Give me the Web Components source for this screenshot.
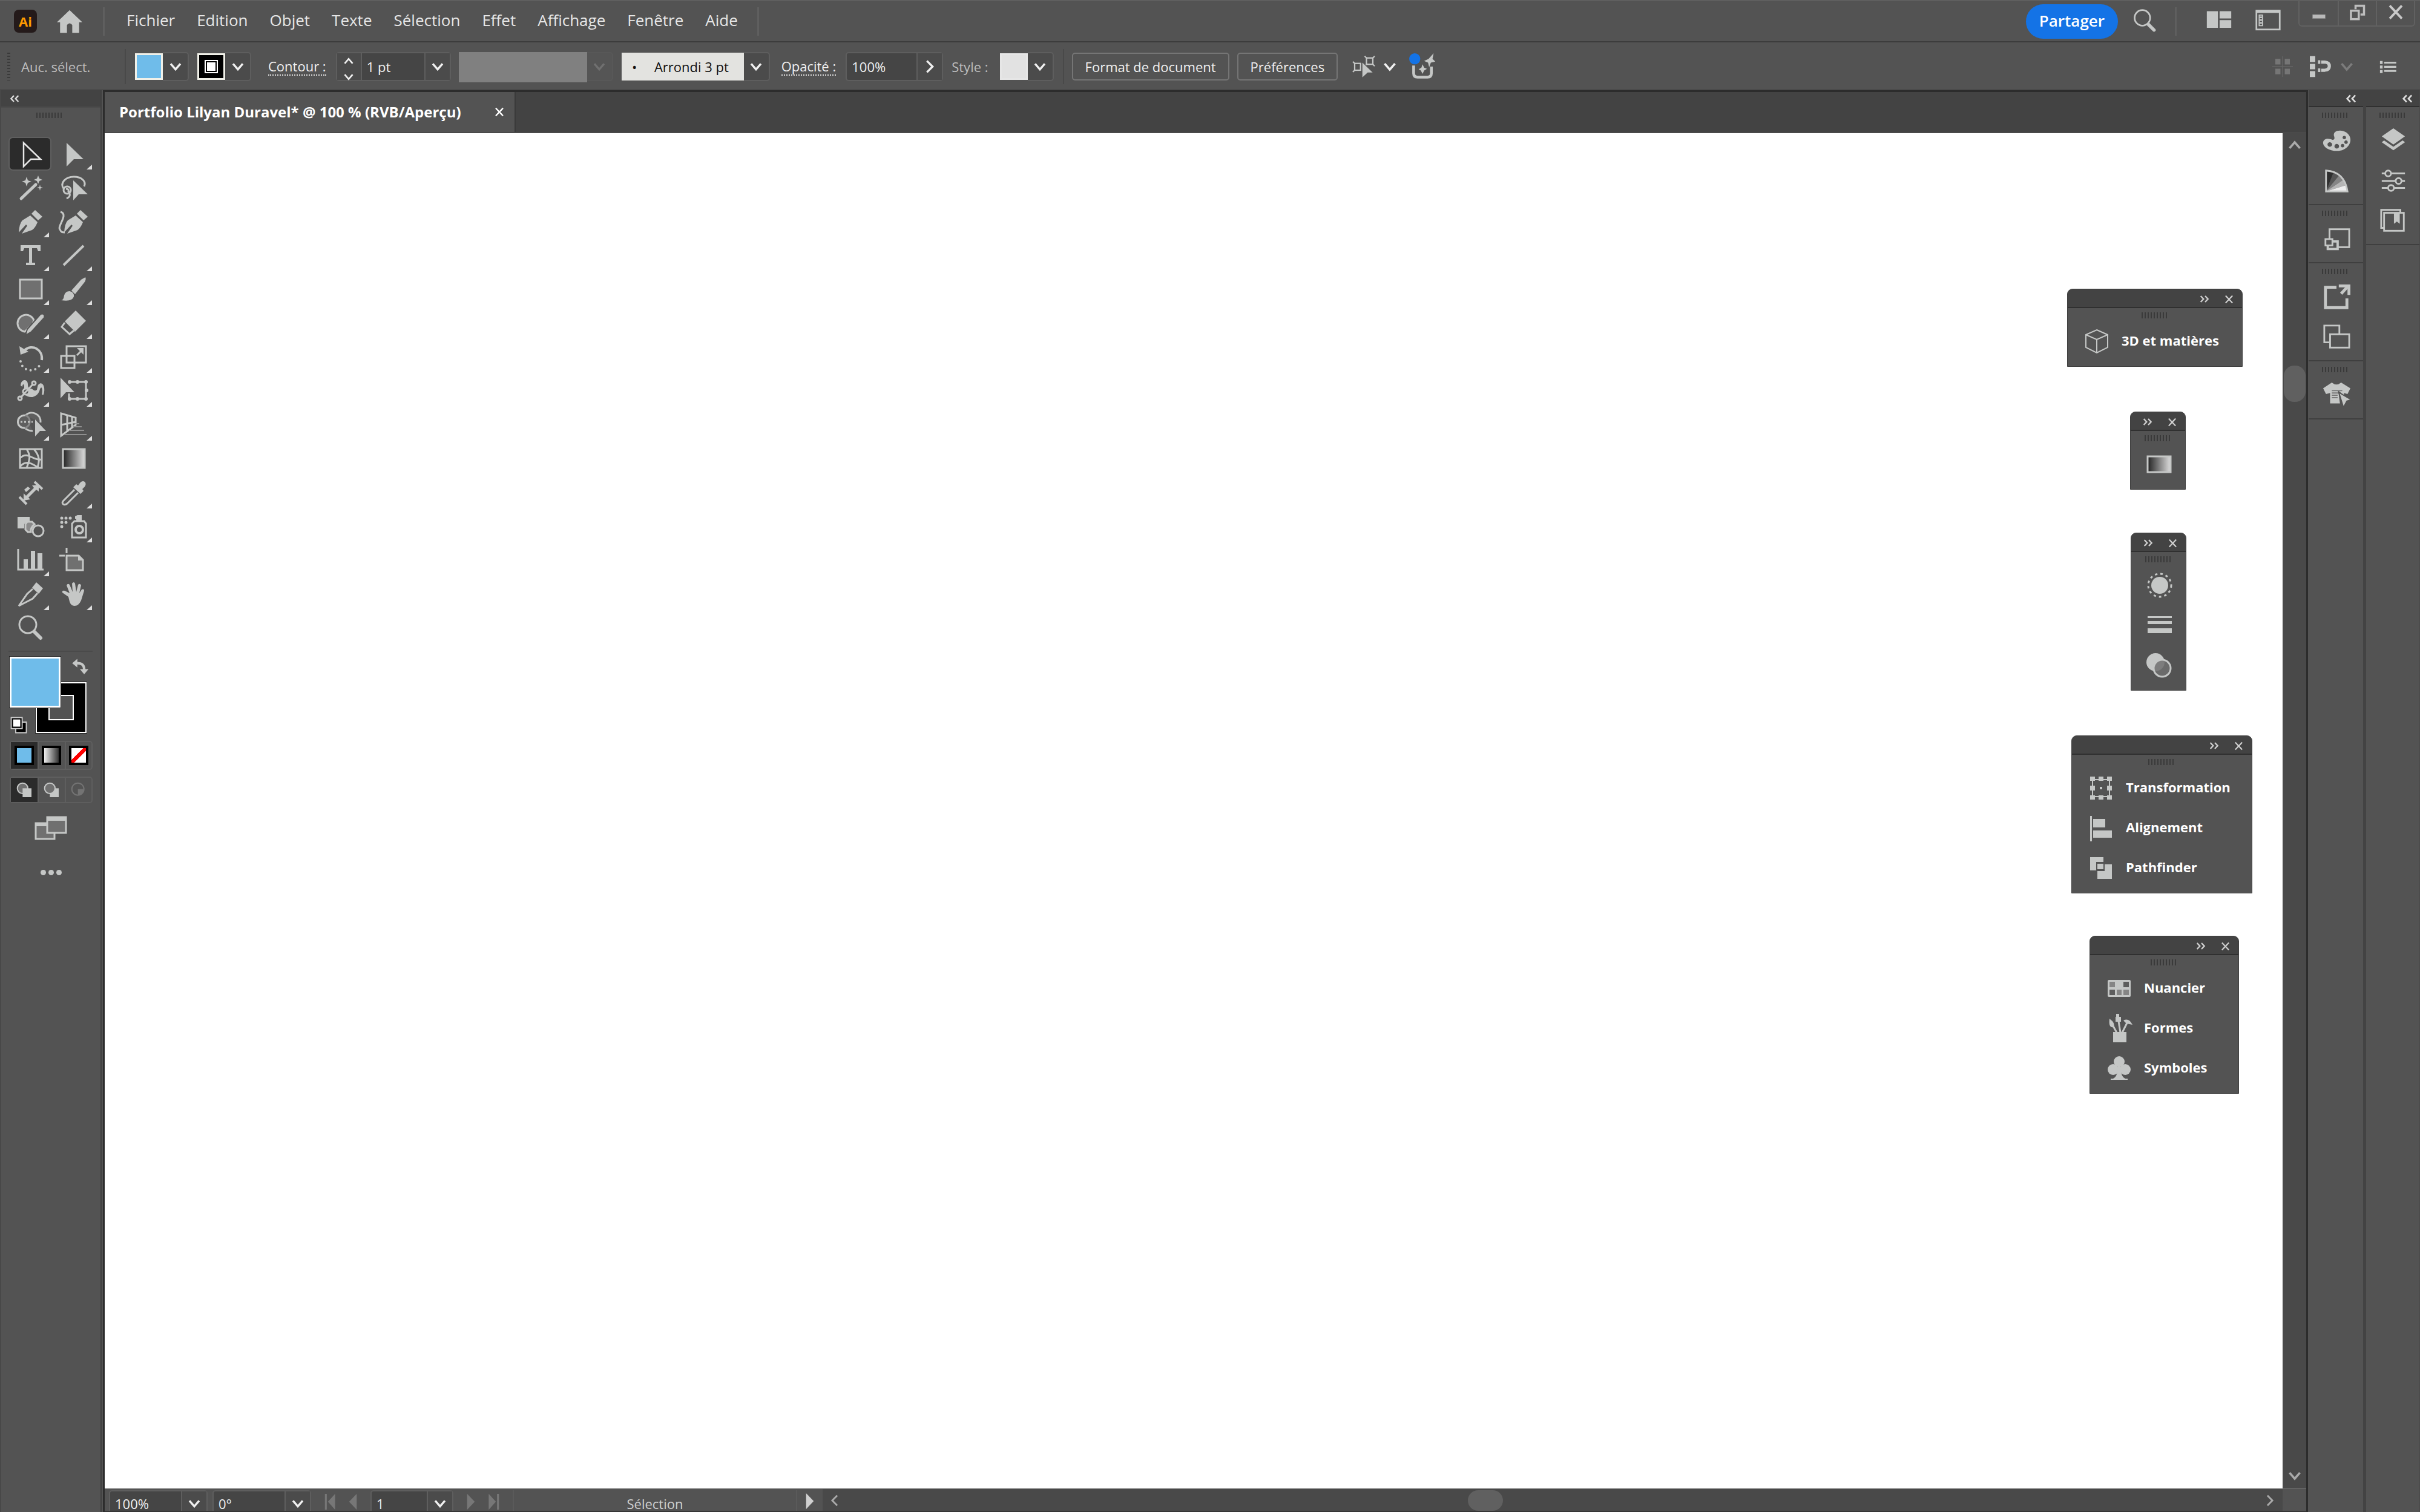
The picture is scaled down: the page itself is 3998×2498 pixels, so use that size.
<!DOCTYPE html>
<html lang="fr">
<head>
<meta charset="utf-8">
<title>Portfolio Lilyan Duravel</title>
<style>
    html, body { margin: 0; height: 100%; }
    body { background: #535353; color: #f0f0f0; font: 22px/30px "Open Sans", "Noto Sans", sans-serif; overflow: hidden; }
</style>
</head>
<body>
<ai-app></ai-app>

<script>
/** Icon drawings on a 48x48 grid. G is the light icon grey, H the half-tone fill. */
const G = '#c5c7c6';
const H = '#707070';
const ARROW = 'M13 6 L41 33 H25 L13 45Z';
const PEN = '<path d="M5 42 Q6 27 11 22 L24 14 L36 25 Q32 35 27 38 L10 44 L19 31 L17 29Z"/><path d="M32 5 L44 16 L37 22 L26 11Z"/>';

const ICONS = {
    select: `<path d="${ARROW}" fill="none" stroke="#e8e8e8" stroke-width="2.5"/>`,
    direct: `<path d="${ARROW}"/>`,
    wand: '<path d="M9 42 L33 19" stroke-width="5" stroke="currentColor" stroke-linecap="round"/><path d="M18 6 L20 12 L26 14 L20 16 L18 22 L16 16 L10 14 L16 12Z M37 4 L39 9 L44 11 L39 13 L37 18 L35 13 L30 11 L35 9Z M40 19 L41 23 L45 24 L41 25 L40 29 L39 25 L35 24 L39 23Z"/>',
    lasso: '<g class="l"><path d="M9 27 C0 16 12 6 25 6 C38 6 46 14 42 22"/><circle cx="14" cy="28" r="6"/><path d="M12 26 Q17 26 16 30 Q22 38 13 42"/></g><path d="M24 12 L48 35 H33 L24 45Z"/>',
    pen: PEN,
    curvature: `<g transform="translate(4 0)">${PEN}</g><path class="l" d="M3 8 C17 12 -3 32 2 37 C4 42 6 42 10 42"/>`,
    type: '<path d="M8 7 H41 V17 H37 L35 12 H27 V36 H32 V40 H17 V36 H22 V12 H14 L12 17 H8Z"/>',
    line: '<path class="l" style="stroke-width:4" d="M8 40 L41 8"/>',
    rect: `<rect class="l" x="7" y="8" width="36" height="31" style="fill:${H}"/>`,
    brush: '<path d="M44 4 Q46 8 42 13 L27 32 L21 26 L37 8Z"/><path d="M4 42 Q8 42 9 34 Q11 27 18 27 Q26 29 25 36 Q22 45 4 42Z"/>',
    shaper: `<path class="l" style="fill:${H}" d="M30 19 A14 14 0 1 0 15 38 L28 25Z"/><path stroke="#535353" stroke-width="2" d="M41 9 Q49 7 47 15 L26 38 L16 44 L19 34Z"/>`,
    eraser: '<path d="M28 3 L45 20 L27 38 L10 21Z"/><path class="l" d="M10 23 L5 30 L18 42 L25 36"/>',
    rotate: '<path class="l" style="stroke-width:4" d="M14 13 C28 1 45 12 43 29"/><path d="M6 6 L8 20 L21 15Z"/><path class="l" style="stroke-width:4" stroke-linecap="round" stroke-dasharray="0 8" d="M8 31 A17 17 0 0 0 41 34"/>',
    scale: '<g class="l"><rect x="13" y="6" width="32" height="27"/><rect x="4" y="22" width="22" height="20"/><path d="M30 21 L39 12"/></g><path d="M41 9 V20 L30 9Z"/>',
    width: '<path d="M8 15 C9 3 20 4 20 13 C20 18 22 20 24 20 C28 19 30 26 35 22 C36 18 36 14 38 13 C44 7 50 18 46 30 H43 C45 22 43 14 40 21 C37 33 27 36 20 33 C14 31 14 24 14 18 C14 11 11 12 11 17Z"/><g class="l"><path d="M8 35 L29 12"/><circle cx="30" cy="11" r="3"/><circle cx="17" cy="25" r="5" style="fill:#535353"/><path d="M14 28 L20 22"/><circle cx="7" cy="36" r="3"/></g>',
    free: '<g class="l"><path d="M17 9 H45 V37 H17 V28"/></g><path d="M3 2 L26 26 H12 L3 36Z"/><g><circle cx="18" cy="9" r="3"/><circle cx="45" cy="9" r="3"/><circle cx="45" cy="37" r="3"/><circle cx="18" cy="37" r="3"/><circle cx="31" cy="9" r="3"/><circle cx="46" cy="23" r="3"/><circle cx="31" cy="37" r="3"/></g>',
    shapebuilder: '<g class="l" style="fill:#5f5f5f"><path d="M16 8 C26 -1 42 6 41 20 M28 34 C22 34 18 32 15 29 C0 30 -1 8 16 8"/><path d="M16 8 A11 11 0 0 1 15 29" style="stroke:#888"/></g><path d="M8 19 H28" stroke="currentColor" stroke-width="3" stroke-dasharray="3 3"/><path d="M32 15 L50 34 H40 L32 43Z"/>',
    perspective: '<g class="l"><path d="M4 5 L28 12 V24 L4 42Z M4 24 L28 19 M14 8 V34 M22 10 V28"/></g><g stroke="#909090" stroke-width="2"><path d="M27 22 H34 M24 27 H38 M17 33 H42 M9 40 H46"/></g>',
    mesh: '<g class="l"><rect x="7" y="8" width="36" height="31"/><path d="M7 23 C20 10 28 28 43 25 M7 37 C18 24 30 34 38 39 M18 8 C26 20 22 28 18 39 M30 8 C42 22 38 30 36 39"/></g>',
    gradient: '<rect class="l" x="7" y="8" width="36" height="31" style="fill:url(#g)"/>',
    measure: '<path class="l" style="stroke-width:4" d="M31 6 L44 18 M6 31 L18 43"/><path d="M38 11 V22 L34 19 L21 32 L24 35 L13 37 V25 L17 29 L30 16 L27 12Z"/><path d="M14 19 L20 14 L24 17 L17 23Z"/>',
    dropper: '<path d="M35 8 C40 1 48 7 43 14 L39 18 L41 21 L36 26 L24 15 L29 10 L32 12Z"/><path class="l" d="M26 19 L8 37 C3 42 9 46 14 42 L32 24"/>',
    blend: '<path d="M3 8 H23 V16 H18 L14 20 V27 H3Z"/><path class="l" style="fill:#8a8a8a" d="M19 16 H27 L31 20 Q24 26 25 33 H20 L16 29 V20Z"/><circle class="l" cx="37" cy="31" r="9"/>',
    spray: '<g><circle cx="5" cy="10" r="2.5"/><circle cx="12" cy="10" r="2.5"/><circle cx="19" cy="10" r="2.5"/><circle cx="5" cy="17" r="2.5"/><circle cx="12" cy="17" r="2.5"/><circle cx="5" cy="24" r="2.5"/></g><path d="M27 7 L31 5 H38 V14 H29 V11 H27Z"/><path class="l" d="M26 15 H42 L45 19 V42 H22 V19Z"/><circle class="l" style="stroke-width:4" cx="34" cy="29" r="6"/>',
    graph: '<path class="l" d="M4 5 V39 H46"/><path d="M13 22 H20 V38 H13Z M25 8 H32 V38 H25Z M36 12 H44 V38 H36Z"/>',
    artboard: `<path class="l" d="M13 3 V12 M1 16 H10"/><path class="l" style="fill:${H}" d="M13 16 H33 L40 23 V40 H13Z"/><path d="M32 15 V24 H41Z"/>`,
    knife: '<path d="M34 4 L45 14 L38 23 L27 13Z"/><path class="l" d="M28 15 L19 23 L5 43 L28 31 L36 22"/>',
    hand: '<path d="M16 28 L6 21 Q5 17 10 18 L18 22 L13 9 Q15 5 18 8 L23 20 L22 6 Q25 2 27 6 L29 20 L32 8 Q35 5 37 9 L34 22 L38 16 Q42 14 42 18 L37 34 Q33 43 26 43 Q20 43 18 36Z"/>',
    zoom: '<circle class="l" cx="20" cy="18" r="14"/><path stroke="currentColor" stroke-width="6" stroke-linecap="round" d="M31 30 L41 40"/>',
    screen: `<g class="l" style="fill:${H}"><rect x="-1" y="16" width="31" height="26"/><rect x="18" y="6" width="31" height="26"/></g><path d="M-2 15 H17 V21 H-2Z M17 5 H50 V12 H17Z"/>`,
    swap: '<path class="l" style="stroke-width:6" d="M16 15 Q34 14 34 30"/><path d="M6 15 L18 5 V25Z M34 41 L24 29 H44Z"/>',
    defaults: '<path fill="#000" stroke="#ccc" stroke-width="3" d="M16 16 H44 V44 H16Z"/><path fill="#000" stroke="#ccc" stroke-width="3" d="M4 4 H33 V33 H4Z"/><rect x="9" y="9" width="19" height="19" fill="#fff"/>',
    drawnormal: `<circle class="l" cx="20" cy="20" r="13" style="fill:${H}"/><rect x="20" y="20" width="22" height="22"/>`,
    drawbehind: `<rect x="20" y="20" width="22" height="22"/><circle class="l" cx="20" cy="20" r="13" style="fill:${H}"/>`,
    drawinside: '<circle cx="22" cy="22" r="15" fill="none" stroke="#737373" stroke-width="3"/><path fill="#737373" d="M22 22 H37 Q35 35 22 37Z"/>',
    home: '<path d="M24 3 L48 26 H42 V46 H29 V31 Q24 25 19 31 V46 H6 V26 H0Z"/>',
    workspace: '<path d="M2 6 H22 V36 H2Z M25 6 H46 V19 H25Z M25 22 H46 V36 H25Z"/>',
    panelmode: '<rect class="l" x="3" y="5" width="42" height="34"/><path d="M3 4 H45 V9 H3Z"/><rect class="l" x="8" y="13" width="6" height="19" style="stroke-width:2"/><path d="M9 17 H13 M9 22 H13 M9 27 H13" stroke="currentColor" stroke-width="3"/>',
    min: '<path fill="#b9b9b9" stroke="#888" d="M6 31 H42 V42 H6Z"/>',
    restore: '<g fill="none" stroke="#bdbdbd" stroke-width="6"><path d="M18 16 V6 H42 V31 H32"/><rect x="5" y="20" width="22" height="24"/></g>',
    close: '<path d="M8 7 L40 41 M40 7 L8 41" stroke="currentColor" stroke-width="6"/>',
    down: '<path d="M12 17 L24 31 L36 17" fill="none" stroke="currentColor" stroke-width="5"/>',
    up: '<path d="M12 31 L24 17 L36 31" fill="none" stroke="currentColor" stroke-width="5"/>',
    right: '<path d="M17 10 L31 24 L17 38" fill="none" stroke="currentColor" stroke-width="5"/>',
    left: '<path d="M31 10 L17 24 L31 38" fill="none" stroke="currentColor" stroke-width="5"/>',
    collapse: '<path d="M21 9 L7 24 L21 39 M43 9 L29 24 L43 39" fill="none" stroke="currentColor" stroke-width="7"/>',
    expand: '<path d="M5 9 L19 24 L5 39 M27 9 L41 24 L27 39" fill="none" stroke="currentColor" stroke-width="7"/>',
    first: '<path d="M14 3 H19 V45 H14Z M41 3 V45 L22 24Z"/>',
    prev: '<path d="M34 3 V45 L14 24Z"/>',
    next: '<path d="M14 3 V45 L34 24Z"/>',
    last: '<path d="M29 3 H34 V45 H29Z M7 3 V45 L26 24Z"/>',
    similar: '<g class="l"><rect x="4" y="17" width="13" height="15"/><path d="M0 13 L5 18 M0 36 L5 31"/><rect x="30" y="5" width="14" height="14"/><path d="M26 1 L31 6 M48 1 L43 6 M48 23 L43 18 M26 23 L31 18"/></g><path stroke="#535353" stroke-width="2" d="M20 13 L46 38 H33 L20 50Z"/>',
    recolor: '<path class="l" style="stroke-width:5" d="M7 22 V36 Q7 43 14 43 H32 Q39 43 39 36 V24"/><circle cx="9" cy="10" r="10" fill="#1473e6"/><path d="M43 0 L41 10 L46 15 L38 17 L35 25 L33 17 L26 14 L34 10Z M23 20 L26 26 L31 28 L26 31 L23 37 L20 31 L16 29 L21 26Z"/>',
    grid: '<g fill="#767676"><path d="M7 6 H19 V19 H7Z M29 6 H41 V19 H29Z M7 29 H19 V42 H7Z M29 29 H41 V42 H29Z"/><path d="M23 0 H25 V48 H23Z M0 23 H48 V25 H0Z" fill="#666"/></g>',
    magnet: '<path d="M0 1 H12 V14 H0Z M0 18 H12 V30 H0Z M0 34 H12 V47 H0Z"/><path d="M25 14 H33 Q43 15 43 23 Q43 31 33 32 H25" fill="none" stroke="currentColor" stroke-width="7"/><path d="M18 10 H23 V18 H18Z M18 28 H23 V36 H18Z"/>',
    list: '<path d="M3 9 H10 V17 H3Z M3 21 H10 V29 H3Z M3 33 H10 V41 H3Z M14 11 H46 V16 H14Z M14 22 H46 V27 H14Z M14 33 H46 V38 H14Z"/>',
    palette: '<path fill-rule="evenodd" d="M20 16 C16 5 34 3 42 10 C56 22 44 40 28 41 C12 42 0 34 1 26 C3 18 12 20 17 22 Q22 22 20 16Z M37 15 a3 3 0 1 0 1 0Z M40 23 a3 3 0 1 0 1 0Z M34 29 a3 3 0 1 0 1 0Z M24 29 a4 4 0 1 0 1 0Z M12 26 a4 4 0 1 0 1 0Z"/>',
    guide: '<path d="M6 42 V6 L19 9Z" fill="#2e2e2e"/><path d="M6 42 L19 9 L28 15Z" fill="#555"/><path d="M6 42 L28 15 L36 22Z" fill="#858585"/><path d="M6 42 L36 22 L41 31Z" fill="#b5b5b5"/><path d="M6 42 L41 31 L43 42Z" fill="#eee"/><path class="l" d="M6 42 V6 Q38 8 43 42Z"/>',
    transformdoc: '<g class="l"><rect x="12" y="7" width="34" height="31"/><path d="M10 28 H26 V41 H9 V34" style="stroke-width:4;fill:#535353"/><rect x="5" y="24" width="12" height="11" style="fill:#535353"/></g>',
    exporticon: '<path d="M24 7 H5 V42 H42 V26" fill="none" stroke="currentColor" stroke-width="5"/><path d="M32 18 L44 5" stroke="currentColor" stroke-width="5"/><path d="M28 2 H48 V20 H43 V7 H28Z"/>',
    artboards: '<g class="l"><path d="M12 33 H3 V4 H29 V18"/><rect x="13" y="19" width="33" height="23"/></g>',
    mockup: '<path d="M16 2 Q24 9 32 2 L48 12 L43 22 L37 20 V24 L27 16 L30 38 H13 V20 L6 22 L1 12Z"/><path d="M16 16 H34 M16 20 H30 M16 24 H26 M16 28 H26" stroke="#777" stroke-width="2"/><path stroke="#535353" stroke-width="2" d="M28 19 L50 32 L42 34 L36 45Z"/>',
    layers: '<path d="M24 2 L44 16 L24 30 L4 16Z M4 26 L8 23 L24 34 L40 23 L44 26 L24 40Z"/>',
    sliders: '<g class="l"><path d="M4 11 H44 M4 24 H44 M4 36 H44"/><circle cx="15" cy="11" r="5" style="fill:#535353"/><circle cx="33" cy="24" r="5" style="fill:#535353"/><circle cx="20" cy="36" r="5" style="fill:#535353"/></g>',
    library: '<g class="l"><path d="M9 36 H3 V5 H36 V9"/><rect x="8" y="10" width="34" height="31"/></g><path d="M25 10 H35 V29 L30 25 L25 29Z"/>',
    cube: '<path class="l" style="stroke-width:2" d="M24 5 L42 13 V34 L24 43 L6 34 V13Z M6 13 L24 21 L42 13 M24 21 V43"/>',
    gradpanel: '<rect class="l" x="5" y="11" width="38" height="26" style="fill:url(#g)"/>',
    appearance: '<circle cx="24" cy="24" r="14"/><circle class="l" cx="24" cy="24" r="19" stroke-dasharray="4 5"/>',
    stroke: '<path d="M4 9 H44 V12 H4Z M4 17 H44 V22 H4Z M4 29 H44 V37 H4Z"/>',
    transparency: '<circle cx="17" cy="19" r="15"/><circle class="l" cx="28" cy="29" r="14" style="fill:#707070;fill-opacity:.85"/>',
    transform: '<rect class="l" x="10" y="10" width="28" height="28" style="stroke-width:2"/><path d="M6 5 H14 V12 H6Z M20 5 H28 V12 H20Z M34 5 H42 V12 H34Z M6 20 H14 V28 H6Z M34 20 H42 V28 H34Z M6 36 H14 V43 H6Z M20 36 H28 V43 H20Z M34 36 H42 V43 H34Z M22 22 H26 V26 H22Z"/>',
    align: '<path d="M6 4 H9 V46 H6Z M11 9 H31 V23 H11Z M11 28 H42 V40 H11Z"/>',
    pathfinder: '<path fill-rule="evenodd" d="M6 6 H28 V14 H16 V28 H6Z M18 17 H28 V26 H18Z M30 18 H42 V42 H18 V29 H30Z"/>',
    swatches: '<rect x="5" y="10" width="38" height="28" rx="2"/><path fill="#858585" d="M8 13 H17 V22 H8Z M20 26 H28 V35 H20Z M31 26 H40 V35 H31Z"/><path fill="#5d5d5d" d="M31 13 H40 V22 H31Z M8 26 H17 V35 H8Z"/>',
    brushes: '<path d="M14 30 H36 V47 H14Z"/><path d="M8 8 Q18 15 15 22 Q6 24 8 8Z M19 0 H24 V5 H27 V13 H18 V5 H19Z M31 11 Q40 6 46 18 L36 16Z"/><path class="l" d="M14 20 L20 31 M23 12 L26 31 M37 15 L29 31"/>',
    symbols: '<circle cx="24" cy="13" r="9"/><circle cx="14" cy="26" r="9"/><circle cx="34" cy="26" r="9"/><path d="M22 18 H26 Q26 38 34 41 H38 V43 H10 V41 H14 Q22 38 22 18Z"/>'
};

/** Base class: attaches an open shadow root and fills it with styles and markup. */
class AiElement extends HTMLElement {
    constructor() {
        super();
        this.attachShadow({ mode: 'open' });
    }

    connectedCallback() {
        this.shadowRoot.innerHTML = `<style>
            * { box-sizing: border-box; }
            button, input, select { font: inherit; color: inherit; margin: 0; padding: 0; border: 0; background: none; border-radius: 0; }
            button { display: flex; align-items: center; justify-content: center; }
            ${this.styles()}
        </style>${this.render()}`;
    }

    styles() { return ':host { display: block; }'; }
    render() { return '<slot></slot>'; }
    attr(name, fallback = '') { return this.getAttribute(name) ?? fallback; }
}

/** Single icon, drawn from ICONS. */
class AiIcon extends AiElement {
    styles() {
        const size = this.attr('size', '48');
        return `
            :host { display: block; flex: none; width: ${size}px; height: ${size}px; }
            svg { display: block; width: 100%; height: 100%; overflow: visible; fill: currentColor; }
            .l { fill: none; stroke: currentColor; stroke-width: 3; }`;
    }
    render() {
        return `<svg viewBox="0 0 48 48" aria-hidden="true">
            <defs><linearGradient id="g"><stop offset="0" stop-color="#222"/><stop offset="1" stop-color="#ddd"/></linearGradient></defs>
            ${ICONS[this.attr('name')]}</svg>`;
    }
}

/** Row of dark ticks used as a drag handle. */
class AiGrip extends AiElement {
    styles() {
        return `:host { display: block; flex: none; width: 45px; height: 9px;
            background: repeating-linear-gradient(90deg, #3a3a3a 0 2px, #535353 2px 5px); }`;
    }
    render() { return ''; }
}

/** Editable value with optional stepper and drop-down button. */
class AiField extends AiElement {
    styles() {
        return `
            :host { display: flex; flex: none; align-items: center; }
            label { white-space: nowrap; border-bottom: 2px dotted #e0e0e0; line-height: 28px; margin-right: 16px; }
            .box { display: flex; height: ${this.attr('height', '48')}px; border: 2px solid #5e5e5e; border-radius: 5px; background: #454545; }
            input { width: ${this.attr('width')}px; padding: 0 8px; }
            .arrow { width: 42px; border-left: 2px solid #5e5e5e; background: #4b4b4b; }
            .step { display: flex; flex-direction: column; width: 41px; border-right: 2px solid #5e5e5e; background: #4b4b4b; }
            .step button { flex: 1; }`;
    }
    render() {
        const label = this.attr('label');
        return `
            ${label ? `<label for="value">${label}</label>` : ''}
            <div class="box">
                ${this.hasAttribute('stepper') ? `<div class="step">
                    <button aria-label="Augmenter"><ai-icon name="up" size="26"></ai-icon></button>
                    <button aria-label="Diminuer"><ai-icon name="down" size="26"></ai-icon></button>
                </div>` : ''}
                <input id="value" type="text" value="${this.attr('value')}" ${label ? '' : `aria-label="${this.attr('name')}"`}>
                <button class="arrow" aria-label="Ouvrir"><ai-icon name="${this.attr('arrow', 'down')}" size="32"></ai-icon></button>
            </div>`;
    }
}

/** Preview (colour, brush, profile) followed by a drop-down arrow. */
class AiPicker extends AiElement {
    styles() {
        return `
            :host { display: flex; flex: none; height: 48px; }
            ::slotted(*) { flex: none; }
            button { width: 43px; border: 2px solid #5e5e5e; border-left: 0; border-radius: 0 5px 5px 0; background: #4b4b4b; }
            button:disabled { color: #707070; border-color: #585858; background: #555; }`;
    }
    render() {
        return `<slot></slot><button aria-label="${this.attr('name')}" ${this.hasAttribute('disabled') ? 'disabled' : ''}>
            <ai-icon name="down" size="32"></ai-icon></button>`;
    }
}

/** Application bar: logo, menus, sharing and window buttons. */
class AiMenuBar extends AiElement {
    styles() {
        return `
            :host { display: flex; flex: none; align-items: center; height: 70px; padding: 0 8px 0 23px;
                border-top: 2px solid #5f5f5f; border-bottom: 2px solid #3c3c3c; font-size: 26px; color: #e6e6e6; }
            .logo { display: flex; align-items: center; justify-content: center; width: 38px; height: 38px;
                border-radius: 8px; background: #241a1a; color: #ff9a00; font-size: 22px; font-weight: 700; }
            .home { margin: 0 34px 0 33px; color: ${G}; }
            .sep { flex: none; width: 3px; height: 47px; background: #5f5f5f; }
            nav { display: flex; gap: 36px; margin: 0 32px 0 36px; padding-bottom: 4px; }
            .space { flex: 1; }
            .share { height: 57px; padding: 0 22px 2px; border-radius: 29px; background: #1473e6; color: #fff; font-weight: 600; }
            .tool { color: ${G}; }
            .window { display: flex; align-self: flex-start; margin-left: 28px; border: 2px solid #616161; border-top: 0; border-radius: 0 0 6px 6px; }
            .window button { width: 63px; height: 40px; padding-bottom: 4px; color: #c9c9c9; }
            .window button + button { border-left: 2px solid #616161; }`;
    }
    render() {
        const menus = ['Fichier', 'Edition', 'Objet', 'Texte', 'Sélection', 'Effet', 'Affichage', 'Fenêtre', 'Aide'];
        return `
            <span class="logo">Ai</span>
            <button class="home" aria-label="Accueil"><ai-icon name="home" size="42"></ai-icon></button>
            <span class="sep"></span>
            <nav>${menus.map(m => `<button>${m}</button>`).join('')}</nav>
            <span class="sep"></span>
            <span class="space"></span>
            <button class="share">Partager</button>
            <button class="tool" style="margin-left:22px" aria-label="Rechercher"><ai-icon name="zoom" size="44"></ai-icon></button>
            <span class="sep" style="margin-left:28px"></span>
            <button class="tool" style="margin-left:48px" aria-label="Organiser les documents"><ai-icon name="workspace" size="44"></ai-icon></button>
            <button class="tool" style="margin-left:37px" aria-label="Espace de travail"><ai-icon name="panelmode" size="44"></ai-icon></button>
            <div class="window">
                <button aria-label="Réduire"><ai-icon name="min" size="28"></ai-icon></button>
                <button aria-label="Restaurer"><ai-icon name="restore" size="28"></ai-icon></button>
                <button aria-label="Fermer"><ai-icon name="close" size="30"></ai-icon></button>
            </div>`;
    }
}

/** Options of the current selection. */
class AiControlBar extends AiElement {
    styles() {
        return `
            :host { display: flex; flex: none; align-items: center; height: 79px; padding: 2px 38px 0 0; border-bottom: 1px solid #3c3c3c; }
            .grip { width: 5px; height: 46px; margin: 0 18px 0 12px; background: repeating-linear-gradient(#3a3a3a 0 2px, #535353 2px 5px); }
            .dim { color: #bdbdbd; white-space: nowrap; }
            .none { width: 120px; }
            .sep { flex: none; width: 2px; height: 58px; background: #494949; }
            .swatch { width: 46px; height: 44px; margin-top: 2px; border: 3px solid #f0f0e8; }
            .fill { background: #6fbcea; }
            .ring { display: flex; align-items: center; justify-content: center; background: #000; }
            .ring i { width: 18px; height: 18px; border: 2px solid #000; outline: 2px solid #fff; background: #fff; }
            .style { background: #e2e2e2; border-color: #e6e6e6; }
            .profile { width: 212px; height: 50px; background: #808080; }
            .brush { display: block; width: 202px; height: 46px; margin-top: 1px; padding-left: 6px; appearance: none; background: #e3e3e0; color: #111; }
            .text { height: 46px; padding: 0 20px; border: 2px solid #757575; border-radius: 5px; white-space: nowrap; }
            .space { flex: 1; }
            .icon { color: ${G}; }`;
    }
    render() {
        return `
            <span class="grip"></span>
            <span class="dim none">Auc. sélect.</span>
            <span class="sep" style="margin:0 15px 0 51px"></span>
            <ai-picker name="Fond"><span class="swatch fill"></span></ai-picker>
            <ai-picker name="Contour" style="margin:0 28px 0 14px"><span class="swatch ring"><i></i></span></ai-picker>
            <ai-field label="Contour :" value="1 pt" width="103" stepper></ai-field>
            <ai-picker name="Profil" disabled style="margin:0 14px 0 13px"><span class="profile"></span></ai-picker>
            <ai-picker name="Définition de forme"><select class="brush" aria-label="Forme"><option>&nbsp;&nbsp;•&nbsp;&nbsp;&nbsp;&nbsp;&nbsp;Arrondi 3 pt</option></select></ai-picker>
            <ai-field label="Opacité :" value="100%" width="115" arrow="right" style="margin:0 14px 0 19px"></ai-field>
            <span class="dim">Style :</span>
            <ai-picker name="Style" style="margin:0 15px 0 19px"><span class="swatch style"></span></ai-picker>
            <span class="sep"></span>
            <button class="text" style="margin:0 13px">Format de document</button>
            <button class="text">Préférences</button>
            <button class="icon" style="margin-left:25px" aria-label="Objets similaires"><ai-icon name="similar" size="36"></ai-icon></button>
            <button style="margin-left:8px" aria-label="Options"><ai-icon name="down" size="34"></ai-icon></button>
            <button class="icon" style="margin-left:16px" aria-label="Redéfinir les couleurs"><ai-icon name="recolor" size="44"></ai-icon></button>
            <span class="space"></span>
            <button aria-label="Grille"><ai-icon name="grid" size="34"></ai-icon></button>
            <button class="icon" style="margin-left:28px" aria-label="Magnétisme"><ai-icon name="magnet" size="36"></ai-icon></button>
            <button style="margin:0 36px 0 8px;color:#7c7c7c" aria-label="Options du magnétisme"><ai-icon name="down" size="34"></ai-icon></button>
            <button class="icon" aria-label="Menu"><ai-icon name="list" size="30"></ai-icon></button>`;
    }
}

/** One tool of the toolbox. */
class AiTool extends AiElement {
    styles() {
        return `
            :host { display: block; position: relative; }
            button { width: 67px; height: 52px; border-radius: 5px; color: ${G}; }
            :host([active]) button { background: #2b2b2b; outline: 2px solid #5f5f5f; }
            .more { position: absolute; right: 2px; bottom: 4px; width: 9px; height: 8px; background: #ddd; clip-path: polygon(100% 0, 100% 100%, 0 100%); }`;
    }
    render() {
        return `<button aria-label="${this.attr('icon')}"><ai-icon name="${this.attr('icon')}" size="48"></ai-icon></button>
            ${this.hasAttribute('more') ? '<span class="more"></span>' : ''}`;
    }
}

/** Two-column toolbox with the colour controls below. */
class AiToolbox extends AiElement {
    styles() {
        return `
            :host { display: flex; flex-direction: column; flex: none; width: 168px; border-right: 2px solid #3f3f3f; border-left: 2px solid #484848; }
            header { height: 29px; padding: 6px 0 0 14px; background: #434343; border-bottom: 2px solid #4b4b4b; }
            header button { color: #ddd; }
            ai-grip { margin: 8px 0 0 58px; }
            .tools { display: grid; grid-template-columns: repeat(2, 67px); grid-auto-rows: 56px; gap: 0 4px; margin: 33px 0 0 14px; }
            .colors { position: relative; height: 149px; margin: 7px 13px 0 12px; border-top: 2px solid #4a4a4a; }
            .stroke, .fill, .swap, .defaults { position: absolute; }
            .fill { left: 2px; top: 8px; width: 84px; height: 84px; background: #6fbcea; border: 3px solid #fff; outline: 1px solid #222; }
            .stroke { left: 45px; top: 50px; width: 84px; height: 84px; background: #000; border: 2px solid #fff; outline: 1px solid #222; }
            .stroke i { display: block; width: 42px; height: 42px; border: 2px solid #fff; background: #535353; }
            .swap { right: 4px; top: 8px; color: ${G}; }
            .defaults { left: 2px; top: 106px; }
            .modes { display: grid; grid-template-columns: repeat(3, 1fr); margin: 0 13px 11px 14px; height: 48px; border: 2px solid #5e5e5e; border-radius: 5px; }
            .modes button { color: ${G}; }
            .modes button + button { border-left: 2px solid #5e5e5e; }
            .modes .on { background: #2b2b2b; }
            .modes i { width: 32px; height: 32px; border: 4px solid #000; }
            .draw { height: 44px; margin-bottom: 17px; }
            .screen { align-self: center; color: ${G}; }
            .dots { display: flex; gap: 4px; align-self: center; margin-top: 35px; padding: 10px; }
            .dots i { width: 9px; height: 9px; border-radius: 50%; background: ${G}; }`;
    }
    render() {
        // a trailing + marks a tool that opens a group
        const tools = ['select', 'direct+', 'wand', 'lasso', 'pen+', 'curvature', 'type+', 'line+', 'rect+', 'brush+',
            'shaper+', 'eraser+', 'rotate+', 'scale+', 'width+', 'free+', 'shapebuilder+', 'perspective+', 'mesh', 'gradient',
            'measure', 'dropper+', 'blend', 'spray+', 'graph+', 'artboard', 'knife+', 'hand+', 'zoom'];
        return `
            <header><button aria-label="Réduire"><ai-icon name="collapse" size="16"></ai-icon></button></header>
            <ai-grip></ai-grip>
            <div class="tools">${tools.map((t, i) => `<ai-tool icon="${t.replace('+', '')}" ${t.endsWith('+') ? 'more' : ''} ${i ? '' : 'active'}></ai-tool>`).join('')}</div>
            <div class="colors">
                <button class="stroke" aria-label="Contour"><i></i></button>
                <button class="fill" aria-label="Fond"></button>
                <button class="swap" aria-label="Permuter"><ai-icon name="swap" size="34"></ai-icon></button>
                <button class="defaults" aria-label="Couleurs par défaut"><ai-icon name="defaults" size="30"></ai-icon></button>
            </div>
            <div class="modes">
                <button class="on" aria-label="Couleur"><i style="background:#6fbcea"></i></button>
                <button aria-label="Dégradé"><i style="background:linear-gradient(90deg,#eee,#333)"></i></button>
                <button aria-label="Sans"><i style="background:linear-gradient(to bottom right,#fff 40%,#f00 40% 60%,#fff 60%)"></i></button>
            </div>
            <div class="modes draw">
                <button class="on" aria-label="Dessin normal"><ai-icon name="drawnormal" size="32"></ai-icon></button>
                <button aria-label="Dessin arrière"><ai-icon name="drawbehind" size="32"></ai-icon></button>
                <button aria-label="Dessin intérieur" disabled><ai-icon name="drawinside" size="32"></ai-icon></button>
            </div>
            <button class="screen" aria-label="Mode d'écran"><ai-icon name="screen" size="48"></ai-icon></button>
            <button class="dots" aria-label="Modifier la barre d'outils"><i></i><i></i><i></i></button>`;
    }
}

/** Line of a floating panel: icon and optional name. */
class AiPanelRow extends AiElement {
    styles() {
        return `
            :host { display: block; height: 66px; }
            button { justify-content: flex-start; gap: 17px; width: 100%; height: 66px; padding-left: 24px; color: #fff; font-weight: 700; white-space: nowrap; }
            :host([compact]) button { padding-left: 23px; }
            span { padding-bottom: 4px; }
            ai-icon { color: ${G}; }`;
    }
    render() {
        return `<button ${this.hasAttribute('compact') ? `aria-label="${this.attr('icon')}"` : ''}><ai-icon name="${this.attr('icon')}" size="48"></ai-icon><span><slot></slot></span></button>`;
    }
}

/** Floating panel with title strip. */
class AiPanel extends AiElement {
    styles() {
        return `
            :host { display: block; position: absolute; background: #535353; border: 1px solid #3f3f3f; border-radius: 9px 9px 0 0; overflow: hidden; }
            header { display: flex; align-items: center; justify-content: flex-end; gap: 24px; height: 31px; padding: 3px 13px 0 0; background: #434343; border-bottom: 2px solid #303030; color: #d0d0d0; }
            ai-grip { margin: 7px auto 5px; height: 10px; }
            .rows { padding-bottom: 8px; }`;
    }
    render() {
        return `
            <header>
                <button aria-label="Développer"><ai-icon name="expand" size="16"></ai-icon></button>
                <button aria-label="Fermer"><ai-icon name="close" size="17"></ai-icon></button>
            </header>
            <ai-grip></ai-grip>
            <div class="rows"><slot></slot></div>`;
    }
}

/** Group of icons in a docked column. */
class AiDockGroup extends AiElement {
    styles() {
        return `
            :host { display: block; padding: 9px 0 5px; border-bottom: 2px solid #3f3f3f; }
            ai-grip { margin: 0 auto 5px 22px; }
            button { width: 100%; height: 66px; padding-left: 2px; color: ${G}; }`;
    }
    render() {
        return `<ai-grip></ai-grip>${this.attr('icons').split(' ').map(name =>
            `<button aria-label="${name}"><ai-icon name="${name}" size="46"></ai-icon></button>`).join('')}`;
    }
}

/** Docked column of collapsed panels. */
class AiDock extends AiElement {
    styles() {
        return `
            :host { display: flex; flex-direction: column; flex: none; width: 95px; border-right: 5px solid #434343; }
            :host(:last-of-type) { width: 89px; border-right: 1px solid #484848; }
            header { display: flex; justify-content: flex-end; height: 28px; padding: 5px 11px 0 0; background: #434343; border-bottom: 2px solid #303030; color: #ddd; }
            header button { height: 18px; }`;
    }
    render() {
        return `<header><button aria-label="Développer"><ai-icon name="collapse" size="18"></ai-icon></button></header><slot></slot>`;
    }
}

/** Bottom strip: zoom, rotation, artboard navigation and horizontal scroll bar. */
class AiStatusBar extends AiElement {
    styles() {
        return `
            :host { display: flex; flex: none; height: 39px; padding: 2px 0 0 7px; overflow: hidden; align-items: flex-start; border-top: 1px solid #707070; border-bottom: 2px solid #363636; }
            .nav { display: flex; gap: 10px; margin: 4px 14px 0; color: #777; }
            .status { display: flex; align-items: center; justify-content: center; width: 470px; height: 44px; border: 2px solid #5a5a5a; border-width: 0 2px; color: #d0d0d0; }
            .play { width: 42px; height: 36px; color: #d0d0d0; }
            .bar { flex: 1; display: flex; align-items: center; height: 38px; margin-top: -2px; padding: 0 7px 0 6px; background: #494949; color: #aaa; }
            .track { flex: 1; display: flex; padding-left: 43%; }
            .thumb { width: 58px; height: 34px; border-radius: 17px; background: #606060; }
            .corner { width: 39px; height: 36px; }`;
    }
    render() {
        return `
            <ai-field name="Zoom" value="100%" width="117" height="44"></ai-field>
            <ai-field name="Rotation" value="0°" width="117" height="44" style="margin-left:8px"></ai-field>
            <div class="nav">
                <button aria-label="Premier"><ai-icon name="first" size="30"></ai-icon></button>
                <button aria-label="Précédent"><ai-icon name="prev" size="30"></ai-icon></button>
            </div>
            <ai-field name="Plan de travail" value="1" width="91" height="44"></ai-field>
            <div class="nav">
                <button aria-label="Suivant"><ai-icon name="next" size="30"></ai-icon></button>
                <button aria-label="Dernier"><ai-icon name="last" size="30"></ai-icon></button>
            </div>
            <div class="status">Sélection</div>
            <button class="play" aria-label="Afficher"><ai-icon name="next" size="30"></ai-icon></button>
            <div class="bar">
                <button aria-label="Défiler à gauche"><ai-icon name="left" size="28"></ai-icon></button>
                <div class="track"><span class="thumb"></span></div>
                <button aria-label="Défiler à droite"><ai-icon name="right" size="28"></ai-icon></button>
            </div>
            <span class="corner"></span>`;
    }
}

/** Document window: tab strip, canvas with floating panels, scroll bars. */
class AiDocument extends AiElement {
    styles() {
        return `
            :host { display: flex; flex-direction: column; flex: 1; min-width: 0; border: 3px solid #2c2c2c; border-bottom: 0; }
            .tabs { display: flex; flex: none; height: 68px; background: #434343; border-bottom: 2px solid #4a4a4a; }
            .tab { display: flex; align-items: center; gap: 54px; padding: 0 16px 0 24px; background: #535353; border-right: 2px solid #3a3a3a; color: #fff; font-size: 24px; font-weight: 700; white-space: nowrap; }
            .view { flex: 1; display: flex; min-height: 0; }
            .canvas { flex: 1; position: relative; background: #fff; }
            .scroll { display: flex; flex-direction: column; align-items: center; width: 39px; padding: 3px 0 4px; background: #494949; color: #aaa; }
            .thumb { width: 36px; height: 60px; margin-top: 347px; border-radius: 17px; background: #606060; }
            .scroll button:last-child { margin-top: auto; }`;
    }
    render() {
        return `
            <div class="tabs"><div class="tab">Portfolio Lilyan Duravel* @ 100 % (RVB/Aperçu)
                <button aria-label="Fermer"><ai-icon name="close" size="18"></ai-icon></button></div></div>
            <div class="view">
                <div class="canvas"><slot></slot></div>
                <div class="scroll">
                    <button aria-label="Défiler vers le haut"><ai-icon name="up" size="34"></ai-icon></button>
                    <span class="thumb"></span>
                    <button aria-label="Défiler vers le bas"><ai-icon name="down" size="34"></ai-icon></button>
                </div>
            </div>
            <ai-status-bar></ai-status-bar>`;
    }
}

/** Whole application window. */
class AiApp extends AiElement {
    styles() {
        return `
            :host { display: flex; flex-direction: column; height: 100vh; background: #535353; }
            .main { flex: 1; display: flex; min-height: 0; }
            ai-document { margin: 0 1px 0 2px; }`;
    }
    render() {
        return `
            <ai-menu-bar></ai-menu-bar>
            <ai-control-bar></ai-control-bar>
            <div class="main">
                <ai-toolbox></ai-toolbox>
                <ai-document>
                    <ai-panel style="right:66px;top:257px;width:290px">
                        <ai-panel-row icon="cube">3D et matières</ai-panel-row>
                    </ai-panel>
                    <ai-panel style="right:160px;top:460px;width:92px">
                        <ai-panel-row compact icon="gradpanel"></ai-panel-row>
                    </ai-panel>
                    <ai-panel style="right:159px;top:660px;width:92px">
                        <ai-panel-row compact icon="appearance"></ai-panel-row>
                        <ai-panel-row compact icon="stroke"></ai-panel-row>
                        <ai-panel-row compact icon="transparency"></ai-panel-row>
                    </ai-panel>
                    <ai-panel style="right:50px;top:995px;width:299px">
                        <ai-panel-row icon="transform">Transformation</ai-panel-row>
                        <ai-panel-row icon="align">Alignement</ai-panel-row>
                        <ai-panel-row icon="pathfinder">Pathfinder</ai-panel-row>
                    </ai-panel>
                    <ai-panel style="right:72px;top:1326px;width:247px">
                        <ai-panel-row icon="swatches">Nuancier</ai-panel-row>
                        <ai-panel-row icon="brushes">Formes</ai-panel-row>
                        <ai-panel-row icon="symbols">Symboles</ai-panel-row>
                    </ai-panel>
                </ai-document>
                <ai-dock>
                    <ai-dock-group icons="palette guide"></ai-dock-group>
                    <ai-dock-group icons="transformdoc"></ai-dock-group>
                    <ai-dock-group icons="exporticon artboards"></ai-dock-group>
                    <ai-dock-group icons="mockup"></ai-dock-group>
                </ai-dock>
                <ai-dock>
                    <ai-dock-group icons="layers sliders library"></ai-dock-group>
                </ai-dock>
            </div>`;
    }
}

customElements.define('ai-icon', AiIcon);
customElements.define('ai-grip', AiGrip);
customElements.define('ai-field', AiField);
customElements.define('ai-picker', AiPicker);
customElements.define('ai-menu-bar', AiMenuBar);
customElements.define('ai-control-bar', AiControlBar);
customElements.define('ai-tool', AiTool);
customElements.define('ai-toolbox', AiToolbox);
customElements.define('ai-panel-row', AiPanelRow);
customElements.define('ai-panel', AiPanel);
customElements.define('ai-dock-group', AiDockGroup);
customElements.define('ai-dock', AiDock);
customElements.define('ai-status-bar', AiStatusBar);
customElements.define('ai-document', AiDocument);
customElements.define('ai-app', AiApp);
</script>
</body>
</html>
